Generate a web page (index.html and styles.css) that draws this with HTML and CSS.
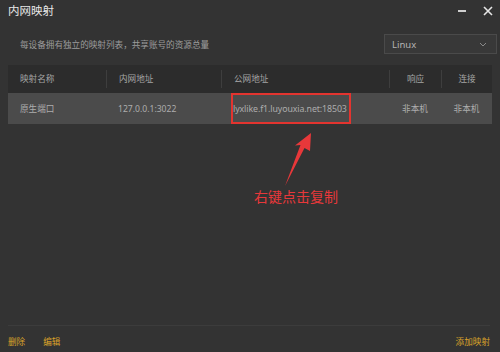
FILE: index.html
```html
<!DOCTYPE html>
<html lang="zh-CN">
<head>
  <meta charset="UTF-8" />
  <meta name="viewport" content="width=device-width, initial-scale=1" />
  <title>内网映射</title>
  <link rel="stylesheet" href="styles.css">
</head>
<body>

  <div class="window">
    <div class="titlebar">
      <span class="title">内网映射</span>
      <div class="controls">
        <span class="btn-min"></span>
        <svg class="btn-close" width="10" height="10" viewBox="0 0 10 10">
          <path d="M1 1 L9 9 M9 1 L1 9" stroke="#e6e6e6" stroke-width="1.6" fill="none" />
        </svg>
      </div>
    </div>

    <div class="toolbar">
      <span class="desc">每设备拥有独立的映射列表，共享账号的资源总量</span>
      <div class="select">
        <span>Linux</span>
        <svg width="8" height="5" viewBox="0 0 8 5">
          <path d="M1 1 L4 4 L7 1" stroke="#8a8a8a" stroke-width="1" fill="none" />
        </svg>
      </div>
    </div>

    <div class="table">
      <div class="thead">
        <div class="cell">映射名称</div>
        <div class="cell sep">内网地址</div>
        <div class="cell sep">公网地址</div>
        <div class="cell sep center">响应</div>
        <div class="cell sep center">连接</div>
      </div>
      <div class="row">
        <div class="cell">原生端口</div>
        <div class="cell">127.0.0.1:3022</div>
        <div class="cell url">lyxlike.f1.luyouxia.net:18503</div>
        <div class="cell center">非本机</div>
        <div class="cell center">非本机</div>
        <div class="mark"></div>
      </div>
    </div>

    <!-- annotation -->
    <svg class="arrow" width="500" height="352" viewBox="0 0 500 352">
      <polygon points="311,133 310,151 304.5,148 285,186 300.5,145 295,145.5" fill="#e8383a" />
    </svg>
    <div class="hint">右键点击复制</div>

    <div class="footer">
      <div class="actions">
        <a class="link">删除</a>
        <a class="link">编辑</a>
      </div>
      <a class="link">添加映射</a>
    </div>
  </div>

</body>
</html>
```

FILE: styles.css
```css
html, body {
  margin: 0;
  padding: 0;
}

body {
  font-family: "Noto Sans", "Noto Sans CJK SC", sans-serif;
  background: #333333;
  color: #a8a8a8;
  font-size: 8.6px;
}

.window {
  position: relative;
  width: 500px;
  height: 352px;
  display: flex;
  flex-direction: column;
  padding: 0 8px;
  box-sizing: border-box;
}

.titlebar {
  height: 22px;
  display: flex;
  align-items: center;
  justify-content: space-between;
}

.title {
  font-size: 11.5px;
  color: #e8e8e8;
  line-height: 1;
}

.controls {
  display: flex;
  align-items: center;
  gap: 17px;
  margin-right: -1px;
}

.btn-min {
  width: 8px;
  height: 2px;
  background: #cfcfcf;
}

.btn-close {
  display: block;
}

.toolbar {
  margin-top: 12px;
  height: 20px;
  display: flex;
  align-items: center;
  justify-content: space-between;
  padding-left: 12px;
  margin-right: -5px;
}

.desc {
  color: #9c9c9c;
}

.select {
  width: 113px;
  height: 20px;
  box-sizing: border-box;
  border: 1px solid #4a4a4a;
  background: #383838;
  display: flex;
  align-items: center;
  justify-content: space-between;
  padding: 0 9px 0 7px;
  color: #b4b4b4;
  font-size: 9.5px;
}

.table {
  margin-top: 11px;
}

.thead, .row {
  display: grid;
  grid-template-columns: 98px 115px 168px 52px 1fr;
  align-items: center;
}

.thead {
  height: 28px;
  background: #2c2c2c;
}

.thead .cell {
  height: 18px;
  line-height: 18px;
  color: #a4a4a4;
}

.thead .sep {
  border-left: 1px solid #3e3e3e;
}

.cell {
  padding-left: 12px;
  white-space: nowrap;
}

.cell.url {
  font-size: 8.8px;
  letter-spacing: -0.1px;
}

.cell.center {
  padding-left: 0;
  text-align: center;
}

.row {
  position: relative;
  height: 31px;
  background: #4b4b4b;
  color: #adadad;
}

.mark {
  position: absolute;
  left: 223px;
  top: 0;
  width: 120px;
  height: 31px;
  box-sizing: border-box;
  border: 2px solid #e3342f;
}

.arrow {
  position: absolute;
  left: 0;
  top: 0;
}

.hint {
  position: absolute;
  left: 254px;
  top: 186px;
  font-size: 14px;
  color: #e8383a;
  font-family: "Noto Sans CJK SC", sans-serif;
}

.footer {
  margin-top: auto;
  height: 27px;
  border-top: 1px solid #3c3c3c;
  display: flex;
  align-items: center;
  justify-content: space-between;
  padding-top: 4px;
  box-sizing: border-box;
  margin-right: 2px;
}

.actions {
  display: flex;
  gap: 18px;
}

.link {
  color: #d9a22a;
  font-size: 8.6px;
}
```
